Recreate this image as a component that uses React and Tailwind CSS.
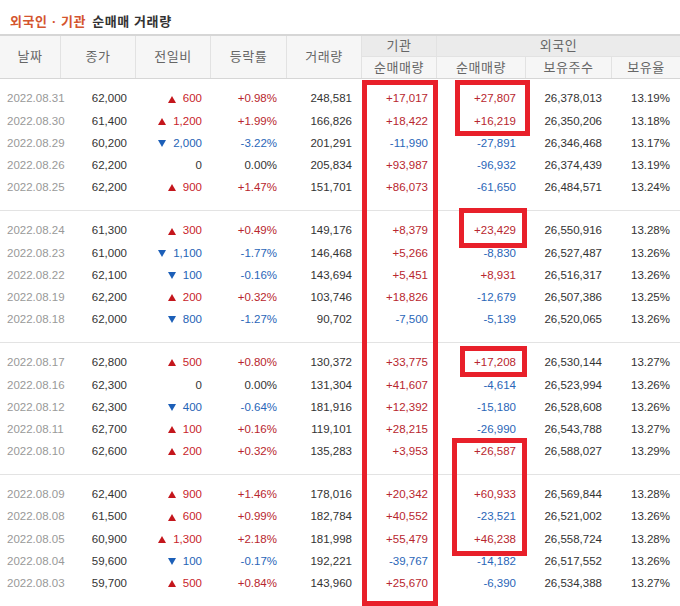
const groups = [
  [
    ['2022.08.31', '62,000', 'u', '600', '+0.98%', '248,581', '+17,017', '+27,807', '26,378,013', '13.19%'],
    ['2022.08.30', '61,400', 'u', '1,200', '+1.99%', '166,826', '+18,422', '+16,219', '26,350,206', '13.18%'],
    ['2022.08.29', '60,200', 'd', '2,000', '-3.22%', '201,291', '-11,990', '-27,891', '26,346,468', '13.17%'],
    ['2022.08.26', '62,200', 'n', '0', '0.00%', '205,834', '+93,987', '-96,932', '26,374,439', '13.19%'],
    ['2022.08.25', '62,200', 'u', '900', '+1.47%', '151,701', '+86,073', '-61,650', '26,484,571', '13.24%'],
  ],
  [
    ['2022.08.24', '61,300', 'u', '300', '+0.49%', '149,176', '+8,379', '+23,429', '26,550,916', '13.28%'],
    ['2022.08.23', '61,000', 'd', '1,100', '-1.77%', '146,468', '+5,266', '-8,830', '26,527,487', '13.26%'],
    ['2022.08.22', '62,100', 'd', '100', '-0.16%', '143,694', '+5,451', '+8,931', '26,516,317', '13.26%'],
    ['2022.08.19', '62,200', 'u', '200', '+0.32%', '103,746', '+18,826', '-12,679', '26,507,386', '13.25%'],
    ['2022.08.18', '62,000', 'd', '800', '-1.27%', '90,702', '-7,500', '-5,139', '26,520,065', '13.26%'],
  ],
  [
    ['2022.08.17', '62,800', 'u', '500', '+0.80%', '130,372', '+33,775', '+17,208', '26,530,144', '13.27%'],
    ['2022.08.16', '62,300', 'n', '0', '0.00%', '131,304', '+41,607', '-4,614', '26,523,994', '13.26%'],
    ['2022.08.12', '62,300', 'd', '400', '-0.64%', '181,916', '+12,392', '-15,180', '26,528,608', '13.26%'],
    ['2022.08.11', '62,700', 'u', '100', '+0.16%', '119,101', '+28,215', '-26,990', '26,543,788', '13.27%'],
    ['2022.08.10', '62,600', 'u', '200', '+0.32%', '135,283', '+3,953', '+26,587', '26,588,027', '13.29%'],
  ],
  [
    ['2022.08.09', '62,400', 'u', '900', '+1.46%', '178,016', '+20,342', '+60,933', '26,569,844', '13.28%'],
    ['2022.08.08', '61,500', 'u', '600', '+0.99%', '182,784', '+40,552', '-23,521', '26,521,002', '13.26%'],
    ['2022.08.05', '60,900', 'u', '1,300', '+2.18%', '181,998', '+55,479', '+46,238', '26,558,724', '13.28%'],
    ['2022.08.04', '59,600', 'd', '100', '-0.17%', '192,221', '-39,767', '-14,182', '26,517,552', '13.26%'],
    ['2022.08.03', '59,700', 'u', '500', '+0.84%', '143,960', '+25,670', '-6,390', '26,534,388', '13.27%'],
  ],
]

const cols = 'grid grid-cols-[61px_75px_75px_76px_75px_75px_89px_86px_68px]'

function tone(v) {
  if (v.startsWith('+')) return 'text-[#b8262e]'
  if (v.startsWith('-')) return 'text-[#2a66b8]'
  return 'text-[#333]'
}

function Arrow({ dir }) {
  if (dir === 'n') return null
  return (
    <svg width="8" height="7" viewBox="0 0 8 7" className="mr-[7px]">
      {dir === 'u' ? (
        <polygon points="4,0 8,7 0,7" fill="#c4161c" />
      ) : (
        <polygon points="0,0 8,0 4,7" fill="#1c5fb8" />
      )}
    </svg>
  )
}

function Row({ r }) {
  const [date, close, dir, diff, rate, vol, inst, frn, hold, pct] = r
  const diffColor = dir === 'u' ? 'text-[#c8242b]' : dir === 'd' ? 'text-[#2563b5]' : 'text-[#333]'
  return (
    <div className={`${cols} h-[22.2px] items-center text-[11.5px]`}>
      <div className="pl-[7px] text-[#999]">{date}</div>
      <div className="pr-[9px] text-right text-[#333]">{close}</div>
      <div className={`flex items-center justify-end pr-[9px] ${diffColor}`}>
        <Arrow dir={dir} />
        {diff}
      </div>
      <div className={`pr-[10px] text-right ${tone(rate)}`}>{rate}</div>
      <div className="pr-[10px] text-right text-[#333]">{vol}</div>
      <div className={`pr-[9px] text-right ${tone(inst)}`}>{inst}</div>
      <div className={`pr-[10px] text-right ${tone(frn)}`}>{frn}</div>
      <div className="pr-[10px] text-right text-[#333]">{hold}</div>
      <div className="pr-[10px] text-right text-[#333]">{pct}</div>
    </div>
  )
}

export default function App() {
  const head = 'flex items-center justify-center border-r border-[#e2e2e2] text-[13px] tracking-[0.5px] text-[#666]'
  return (
    <div
      className="relative h-[606px] w-[680px] overflow-hidden bg-white"
      style={{ fontFamily: '"Liberation Sans", "Noto Sans CJK KR", sans-serif' }}
    >
      <div className="flex h-[34px] items-end pb-[3px] pl-[10px] text-[13px] font-bold tracking-[0.6px]">
        <span className="text-[#d4552e]">외국인 · 기관</span>
        <span className="ml-[6px] text-[#333]">순매매 거래량</span>
      </div>

      <div className={`${cols} grid-rows-[21px_21px] border-t-2 border-b border-t-[#d6d6d6] border-b-[#d6d6d6] bg-[#f6f6f6]`}>
        <div className={`${head} row-span-2`}>날짜</div>
        <div className={`${head} row-span-2`}>종가</div>
        <div className={`${head} row-span-2`}>전일비</div>
        <div className={`${head} row-span-2`}>등락률</div>
        <div className={`${head} row-span-2`}>거래량</div>
        <div className={`${head} border-b bg-[#ebebeb]`}>기관</div>
        <div className={`${head} col-span-3 border-r-0 border-b bg-[#ebebeb]`}>외국인</div>
        <div className={head}>순매매량</div>
        <div className={head}>순매매량</div>
        <div className={head}>보유주수</div>
        <div className={`${head} border-r-0`}>보유율</div>
      </div>

      {groups.map((g, i) => (
        <div key={i} className="border-b border-[#e3e3e3] pt-[9px] pb-[11px]">
          {g.map((r) => (
            <Row key={r[0]} r={r} />
          ))}
        </div>
      ))}

      {/* red highlight boxes */}
      <div className="absolute left-[362px] top-[80px] h-[526px] w-[76px] border-[5px] border-[#e8202a]" />
      <div className="absolute left-[455px] top-[80px] h-[56px] w-[75px] border-[5px] border-[#e8202a]" />
      <div className="absolute left-[459px] top-[208px] h-[40px] w-[68px] border-[5px] border-[#e8202a]" />
      <div className="absolute left-[460px] top-[346px] h-[31px] w-[67px] border-[5px] border-[#e8202a]" />
      <div className="absolute left-[452px] top-[438px] h-[118px] w-[75px] border-[5px] border-[#e8202a]" />
    </div>
  )
}
